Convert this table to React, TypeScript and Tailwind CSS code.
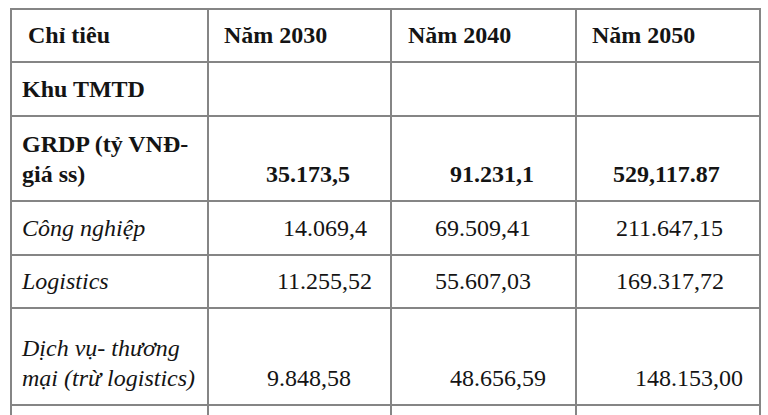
const cell = "font-['Liberation_Serif'] bg-white flex flex-col justify-end pb-[11px] whitespace-nowrap";

type Cell = { text: React.ReactNode; cls: string };

const grid: Cell[][] = [
  [
    { text: "Chỉ tiêu", cls: "font-bold pl-[16px]" },
    { text: "Năm 2030", cls: "font-bold pl-[15px]" },
    { text: "Năm 2040", cls: "font-bold pl-[16px]" },
    { text: "Năm 2050", cls: "font-bold pl-[15px]" },
  ],
  [
    { text: "Khu TMTD", cls: "font-bold pl-[10px]" },
    { text: "", cls: "" },
    { text: "", cls: "" },
    { text: "", cls: "" },
  ],
  [
    {
      text: (
        <>
          <span>GRDP (tỷ VNĐ-</span>
          <span>giá ss)</span>
        </>
      ),
      cls: "font-bold pl-[10px]",
    },
    { text: "35.173,5", cls: "font-bold pl-[57px]" },
    { text: "91.231,1", cls: "font-bold pl-[58px]" },
    { text: "529,117.87", cls: "font-bold pl-[36px]" },
  ],
  [
    { text: "Công nghiệp", cls: "italic pl-[10px]" },
    { text: "14.069,4", cls: "pl-[74px]" },
    { text: "69.509,41", cls: "pl-[43px]" },
    { text: "211.647,15", cls: "pl-[39px]" },
  ],
  [
    { text: "Logistics", cls: "italic pl-[10px]" },
    { text: "11.255,52", cls: "pl-[68px]" },
    { text: "55.607,03", cls: "pl-[43px]" },
    { text: "169.317,72", cls: "pl-[39px]" },
  ],
  [
    {
      text: (
        <>
          <span>Dịch vụ- thương</span>
          <span>mại (trừ logistics)</span>
        </>
      ),
      cls: "italic pl-[10px]",
    },
    { text: "9.848,58", cls: "pl-[58px]" },
    { text: "48.656,59", cls: "pl-[58px]" },
    { text: "148.153,00", cls: "pl-[58px]" },
  ],
  [
    { text: "", cls: "" },
    { text: "", cls: "" },
    { text: "", cls: "" },
    { text: "", cls: "" },
  ],
];

const serif = { fontFamily: "'Liberation Serif', 'Times New Roman', serif" };

export default function App() {
  return (
    <div
      className="font-['Liberation_Serif'] w-[768px] h-[415px] overflow-hidden bg-white pt-[8px] pl-[10px] text-[24px] leading-[30px] text-[#141414]"
      style={serif}
    >
      {/* table grid: gray background shows through the 2px gaps as rules */}
      <div className="grid w-[751px] grid-cols-[195px_181px_183px_182px] grid-rows-[51px_52px_83px_52px_51px_95px_60px] gap-[2px] p-[2px] bg-[#858585]">
        {grid.flat().map((c, i) => (
          <div key={i} className={`${cell} ${c.cls}`} style={serif}>
            {c.text}
          </div>
        ))}
      </div>
    </div>
  );
}
